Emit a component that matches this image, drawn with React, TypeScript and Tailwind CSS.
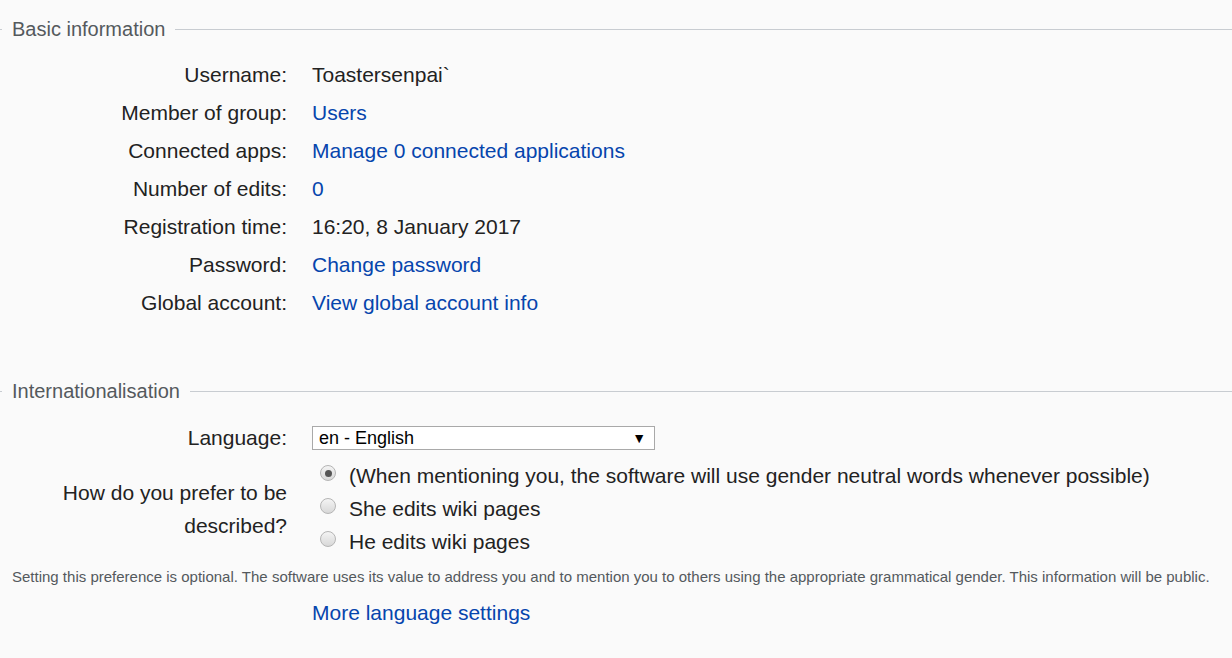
import React from "react";

const font = { fontFamily: '"Liberation Sans", Arial, sans-serif' };

function Legend({ children }: { children: React.ReactNode }) {
  return (
    <div className="flex items-center h-[24px]">
      <div className="w-[2px] h-px bg-[#c8ccd1]" />
      <div className="px-[10px] text-[20px] leading-[24px] text-[#54595d]">{children}</div>
      <div className="flex-1 h-px bg-[#c8ccd1]" />
    </div>
  );
}

function Row({ label, children }: { label: string; children: React.ReactNode }) {
  return (
    <div className="grid grid-cols-[287px_1fr] gap-x-[25px] h-[38px] items-center">
      <div className="text-right text-[#222]">{label}</div>
      <div>{children}</div>
    </div>
  );
}

function Link({ children }: { children: React.ReactNode }) {
  return <a className="text-[#0645ad] cursor-pointer">{children}</a>;
}

function Radio({ checked, children }: { checked?: boolean; children: React.ReactNode }) {
  return (
    <div className="flex items-center h-[33px]">
      <div className="ml-[8px] w-[16px] h-[16px] rounded-full border border-[#b5b5b5] bg-gradient-to-b from-[#f4f4f4] to-[#d8d8d8] flex items-center justify-center -mt-[5px]">
        {checked && <div className="w-[7px] h-[7px] rounded-full bg-[#555]" />}
      </div>
      <div className="ml-[13px] text-[#222]">{children}</div>
    </div>
  );
}

export default function App() {
  return (
    <div className="w-[1232px] h-[658px] bg-[#fafafa] overflow-hidden text-[21px] leading-[26px]" style={font}>
      <div className="pt-[17px]">
        <Legend>Basic information</Legend>
        <div className="mt-[15px]">
          <Row label="Username:"><span className="text-[#222]">Toastersenpai`</span></Row>
          <Row label="Member of group:"><Link>Users</Link></Row>
          <Row label="Connected apps:"><Link>Manage 0 connected applications</Link></Row>
          <Row label="Number of edits:"><Link>0</Link></Row>
          <Row label="Registration time:"><span className="text-[#222]">16:20, 8 January 2017</span></Row>
          <Row label="Password:"><Link>Change password</Link></Row>
          <Row label="Global account:"><Link>View global account info</Link></Row>
        </div>
      </div>
      <div className="mt-[57px]">
        <Legend>Internationalisation</Legend>
        <div className="mt-[16px]">
          <Row label="Language:">
            <div className="w-[343px] h-[24px] border border-[#a9a9a9] bg-white flex items-center justify-between pl-[6px] pr-[8px] text-[18px] leading-[20px] text-black">
              <span>en - English</span>
              <span className="text-[14px] leading-[14px]">▼</span>
            </div>
          </Row>
          <div className="grid grid-cols-[287px_1fr] gap-x-[25px] items-center mt-[2px]">
            <div className="text-right text-[#222] leading-[33px] pl-[40px]">How do you prefer to be described?</div>
            <div>
              <Radio checked>(When mentioning you, the software will use gender neutral words whenever possible)</Radio>
              <Radio>She edits wiki pages</Radio>
              <Radio>He edits wiki pages</Radio>
            </div>
          </div>
          <div className="pl-[12px] mt-[9px] text-[15px] leading-[20px] text-[#54595d]">
            Setting this preference is optional. The software uses its value to address you and to mention you to others using the appropriate grammatical gender. This information will be public.
          </div>
          <div className="pl-[312px] mt-[13px]">
            <Link>More language settings</Link>
          </div>
        </div>
      </div>
    </div>
  );
}
